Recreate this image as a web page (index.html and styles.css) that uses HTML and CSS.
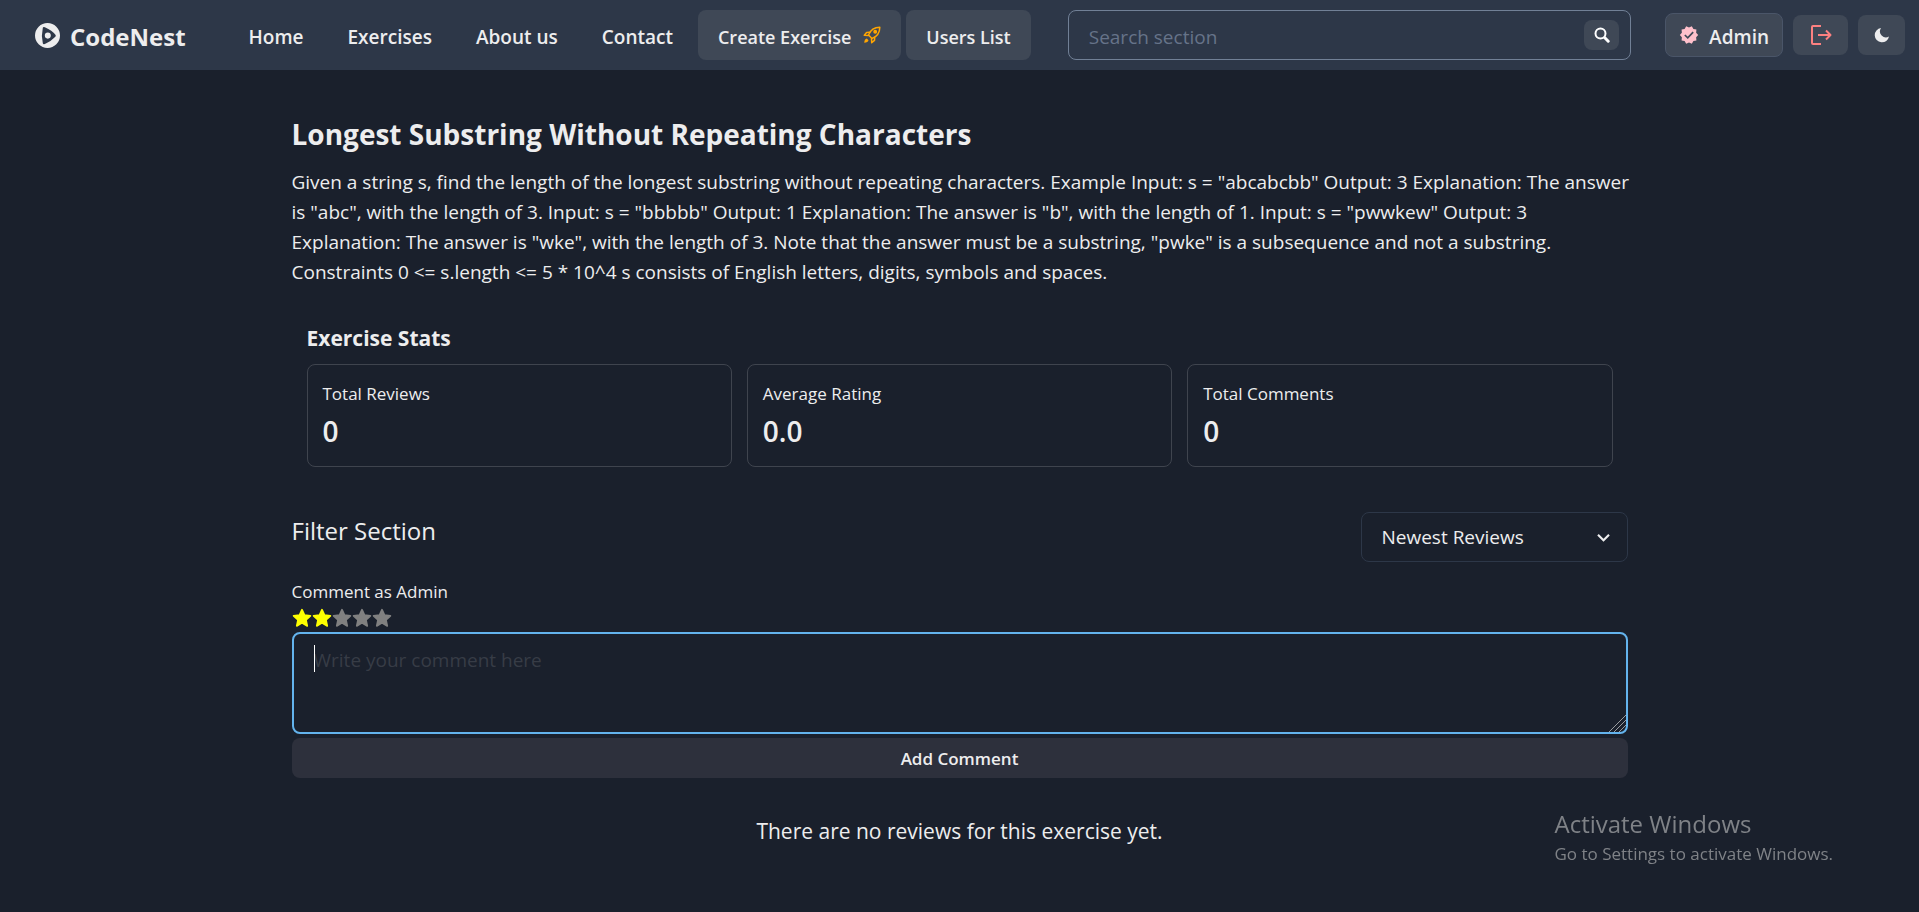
FILE: index.html
```html
<!DOCTYPE html>
<html lang="en">
<head>
<meta charset="utf-8">
<meta name="viewport" content="width=device-width, initial-scale=1">
<title>CodeNest</title>
<link rel="stylesheet" href="styles.css">
</head>
<body>
<header class="navbar">
  <a class="brand" href="#">
    <svg class="brand-icon" viewBox="0 0 24 24" aria-hidden="true"><path fill="currentColor" fill-rule="evenodd" d="M12 0a12 12 0 1 0 0 24a12 12 0 0 0 0-24zM7.500 4.500Q7.800 3.400 9.500 4Q16.500 7 19.800 11.500Q20.200 12.500 19.500 13.200Q15 18 9.500 20.200Q7.800 20.700 7.500 19.500Q5.800 12 7.500 4.500zM12.300 9.200a2.900 2.900 0 1 0 0 5.800a2.900 2.900 0 0 0 0-5.800z"/></svg>
    <span class="nav-text">CodeNest</span>
  </a>
  <nav class="nav-links">
    <a class="nav-text" href="#">Home</a>
    <a class="nav-text" href="#">Exercises</a>
    <a class="nav-text" href="#">About us</a>
    <a class="nav-text" href="#">Contact</a>
  </nav>
  <div class="nav-actions">
    <button class="nav-button" type="button"><span class="nav-text">Create Exercise</span>
      <svg class="icon-rocket" viewBox="0 0 18 18" aria-hidden="true" fill="none" stroke="currentColor" stroke-width="1.500" stroke-linejoin="round" stroke-linecap="round"><path d="M5.500 9C7.500 4 11 1.200 16.800 1.200C16.800 7 14 10.500 9 12.500z"/><path d="M6.800 6.300L3.600 6.500 1.300 9.300l4.200.200M11.700 11.200l-.200 3.200-2.800 2.300-.200-4.200"/><circle cx="12.200" cy="5.800" r="1.200" fill="currentColor"/><path d="M3.800 12.500Q1.500 13 1.200 16.800Q5 16.500 5.500 14.200z" fill="currentColor" stroke="none"/></svg>
    </button>
    <button class="nav-button" type="button"><span class="nav-text">Users List</span></button>
  </div>
  <form class="search" role="search">
    <input class="search-input" type="search" placeholder="Search section" aria-label="Search section">
    <button class="search-button" type="button" aria-label="Search">
      <svg viewBox="0 0 16 16" aria-hidden="true" fill="none" stroke="currentColor" stroke-width="2"><circle cx="6.500" cy="6.500" r="5"/><path stroke-width="3" stroke-linecap="round" d="M10.800 10.800l3.400 3.400"/></svg>
    </button>
  </form>
  <div class="account">
    <button class="account-button" type="button">
      <svg viewBox="0 0 24 24" aria-hidden="true"><path fill="pink" d="M23 12l-2.440-2.780.340-3.680-3.610-.820-1.890-3.180L12 3 8.600 1.540 6.710 4.720l-3.610.810.340 3.680L1 12l2.440 2.780-.340 3.690 3.610.820 1.890 3.180L12 21l3.400 1.460 1.890-3.180 3.610-.820-.340-3.680L23 12z"/><path fill="none" stroke="#3f4856" stroke-width="2" d="M7 12l3.500 3.500 6.500-7"/></svg>
      <span class="nav-text">Admin</span>
    </button>
    <button class="icon-button logout" type="button" aria-label="Log out">
      <svg viewBox="0 0 24 24" aria-hidden="true" fill="none" stroke="currentColor" stroke-width="2" stroke-linejoin="round"><path d="M12 3H4Q3 3 3 4v16q0 1 1 1h8M9 12h12M17 7.500l4.500 4.500-4.500 4.500"/></svg>
    </button>
    <button class="icon-button theme" type="button" aria-label="Dark mode">
      <svg viewBox="0 0 16 16" aria-hidden="true"><path fill="currentColor" d="M7 1A7.200 7.200 0 1 0 15 9.500A6 6 0 0 1 7 1z"/></svg>
    </button>
  </div>
</header>
<main class="page">
  <h1 class="title">Longest Substring Without Repeating Characters</h1>
  <p class="description">Given a string s, find the length of the longest substring without repeating characters. Example Input: s = "abcabcbb" Output: 3 Explanation: The answer is "abc", with the length of 3. Input: s = "bbbbb" Output: 1 Explanation: The answer is "b", with the length of 1. Input: s = "pwwkew" Output: 3 Explanation: The answer is "wke", with the length of 3. Note that the answer must be a substring, "pwke" is a subsequence and not a substring. Constraints 0 &lt;= s.length &lt;= 5 * 10^4 s consists of English letters, digits, symbols and spaces.</p>
  <section class="stats">
    <h2 class="stats-title">Exercise Stats</h2>
    <dl class="stats-grid">
      <div class="stat"><dt>Total Reviews</dt><dd>0</dd></div>
      <div class="stat"><dt>Average Rating</dt><dd>0.0</dd></div>
      <div class="stat"><dt>Total Comments</dt><dd>0</dd></div>
    </dl>
  </section>
  <section class="filter">
    <label class="filter-label" for="sort">Filter Section</label>
    <div class="select-wrap">
      <select class="select" id="sort"><option>Newest Reviews</option></select>
      <svg class="chevron" viewBox="0 0 24 24" aria-hidden="true"><path fill="currentColor" d="M16.590 8.590L12 13.170 7.410 8.590 6 10l6 6 6-6z"/></svg>
    </div>
  </section>
  <form class="comment">
    <label class="comment-label" for="comment">Comment as Admin</label>
    <div class="stars">
      <button class="star on" type="button" aria-label="1 star"><svg viewBox="0 0 24 24"><path d="M12 2l3 6.600 7.100.800-5.300 4.900 1.500 7.200L12 17.800l-6.300 3.700 1.500-7.200L1.900 9.400 9 8.600z"/></svg></button>
      <button class="star on" type="button" aria-label="2 stars"><svg viewBox="0 0 24 24"><path d="M12 2l3 6.600 7.100.800-5.300 4.900 1.500 7.200L12 17.800l-6.300 3.700 1.500-7.200L1.900 9.400 9 8.600z"/></svg></button>
      <button class="star" type="button" aria-label="3 stars"><svg viewBox="0 0 24 24"><path d="M12 2l3 6.600 7.100.800-5.300 4.900 1.500 7.200L12 17.800l-6.300 3.700 1.500-7.200L1.900 9.400 9 8.600z"/></svg></button>
      <button class="star" type="button" aria-label="4 stars"><svg viewBox="0 0 24 24"><path d="M12 2l3 6.600 7.100.800-5.300 4.900 1.500 7.200L12 17.800l-6.300 3.700 1.500-7.200L1.900 9.400 9 8.600z"/></svg></button>
      <button class="star" type="button" aria-label="5 stars"><svg viewBox="0 0 24 24"><path d="M12 2l3 6.600 7.100.800-5.300 4.900 1.500 7.200L12 17.800l-6.300 3.700 1.500-7.200L1.900 9.400 9 8.600z"/></svg></button>
    </div>
    <div class="comment-field">
      <textarea class="comment-input" id="comment" placeholder="Write your comment here"></textarea>
      <span class="caret"></span>
      <svg class="grip" viewBox="0 0 18 18" aria-hidden="true" fill="none" stroke="#9a9ca0"><path d="M1 18L18 1M6 18L18 6M11 18l7-7"/></svg>
    </div>
    <button class="submit" type="button">Add Comment</button>
  </form>
  <p class="empty">There are no reviews for this exercise yet.</p>
</main>
<aside class="watermark">
  <p class="watermark-title">Activate Windows</p>
  <p class="watermark-text">Go to Settings to activate Windows.</p>
</aside>
</body>
</html>
```
FILE: styles.css
```css
*, *::before, *::after { box-sizing: border-box; }
body {
  margin: 0;
  min-height: 100vh;
  background: #1a202c;
  color: #ededee;
  font-family: "Segoe UI", "Open Sans", "Noto Sans", sans-serif;
  font-size: 19px;
  line-height: 30px;
}
h1, h2, p, dl, dd { margin: 0; }
a { color: inherit; text-decoration: none; }
button, input, select, textarea { font: inherit; color: inherit; }
button { border: 0; padding: 0; background: none; cursor: pointer; }
svg { display: block; flex: none; }

.navbar {
  display: flex;
  align-items: center;
  height: 70px;
  padding: 0 14px 0 35px;
  background: #2d3748;
  white-space: nowrap;
}
.nav-text { padding-top: 4px; }
.brand { display: flex; align-items: center; gap: 10px; font-size: 24px; font-weight: 700; }
.brand-icon { width: 25px; height: 25px; }
.nav-links { display: flex; gap: 44px; margin-left: 63px; font-weight: 600; }
.nav-actions { display: flex; gap: 5px; margin-left: 25px; }
.nav-button {
  display: flex;
  align-items: center;
  gap: 12px;
  height: 50px;
  padding: 0 20px;
  border-radius: 8px;
  background: #3f4856;
  font-size: 18px;
  font-weight: 600;
}
.icon-rocket { width: 18px; height: 18px; color: orange; }
.search {
  display: flex;
  align-items: center;
  flex: 1;
  height: 50px;
  margin-left: 37px;
  padding: 0 11px 0 20px;
  border: 1px solid #718096;
  border-radius: 8px;
}
.search-input { flex: 1; min-width: 0; padding: 4px 0 0; border: 0; outline: 0; background: none; }
.search-input::placeholder { color: #667389; }
.search-button {
  display: grid;
  place-items: center;
  width: 35px;
  height: 30px;
  border-radius: 8px;
  background: #3f4856;
  color: #fff;
}
.search-button svg { width: 16px; height: 16px; }
.account { display: flex; align-items: center; gap: 10px; margin-left: 34px; }
.account-button {
  display: flex;
  align-items: center;
  gap: 10px;
  height: 44px;
  padding: 0 13px;
  border: 1px solid #4a5568;
  border-radius: 8px;
  background: #3f4856;
  font-weight: 600;
}
.account-button svg { width: 20px; height: 20px; }
.icon-button { display: grid; place-items: center; height: 40px; border-radius: 8px; background: #3f4856; }
.logout { width: 55px; color: #fc8181; }
.logout svg { width: 24px; height: 24px; }
.theme { width: 47px; }
.theme svg { width: 16px; height: 16px; }

.page { max-width: 1336px; margin: 0 auto; padding-top: 44px; }
.title { font-size: 28px; line-height: 40px; font-weight: 700; }
.description { margin: 13px -8px 0 0; }
.stats { padding: 35px 15px 0; }
.stats-title { font-size: 21px; line-height: 32px; font-weight: 700; }
.stats-grid { display: grid; grid-template-columns: repeat(3, 1fr); gap: 15px; margin-top: 10px; }
.stat { padding: 15px 15px 16px; border: 1px solid #3f444e; border-radius: 8px; }
.stat dt { font-size: 17px; line-height: 28px; }
.stat dd { margin-top: 4px; font-size: 28px; line-height: 38px; font-weight: 600; }
.filter { display: flex; justify-content: space-between; margin-top: 45px; }
.filter-label { font-size: 24px; line-height: 38px; }
.select-wrap { position: relative; width: 267px; }
.select {
  appearance: none;
  width: 100%;
  height: 50px;
  padding: 0 40px 0 20px;
  border: 1px solid #2d3748;
  border-radius: 8px;
  background: #1a202c;
}
.chevron { position: absolute; top: 13px; right: 12px; width: 25px; height: 25px; pointer-events: none; }
.comment { display: flex; flex-direction: column; margin-top: 15px; }
.comment-label { font-size: 17px; line-height: 30px; }
.stars { display: flex; height: 25px; }
.star { display: flex; width: 20px; height: 22px; color: gray; }
.star svg { width: 20px; height: 22px; fill: currentColor; stroke: currentColor; stroke-width: 2; stroke-linejoin: round; }
.star.on { color: #ff0; }
.comment-field { position: relative; display: flex; }
.comment-input {
  width: 100%;
  height: 102px;
  padding: 11px 20px;
  border: 2px solid #63b3ed;
  border-radius: 8px;
  outline: 0;
  background: none;
  resize: none;
}
.comment-input::placeholder { color: #373c46; opacity: 1; }
.caret { position: absolute; top: 13px; left: 22px; width: 1px; height: 27px; background: #fff; }
.grip { position: absolute; right: 2px; bottom: 2px; width: 18px; height: 18px; pointer-events: none; }
.submit { height: 40px; margin-top: 4px; padding-top: 2px; border-radius: 8px; background: #2d303c; font-size: 17px; font-weight: 600; }
.empty { margin-top: 36px; font-size: 21px; line-height: 34px; text-align: center; }

.watermark { position: fixed; right: 86px; bottom: 45px; color: #7f8287; }
.watermark-title { font-size: 24px; line-height: 34px; }
.watermark-text { font-size: 17px; line-height: 26px; }
```
